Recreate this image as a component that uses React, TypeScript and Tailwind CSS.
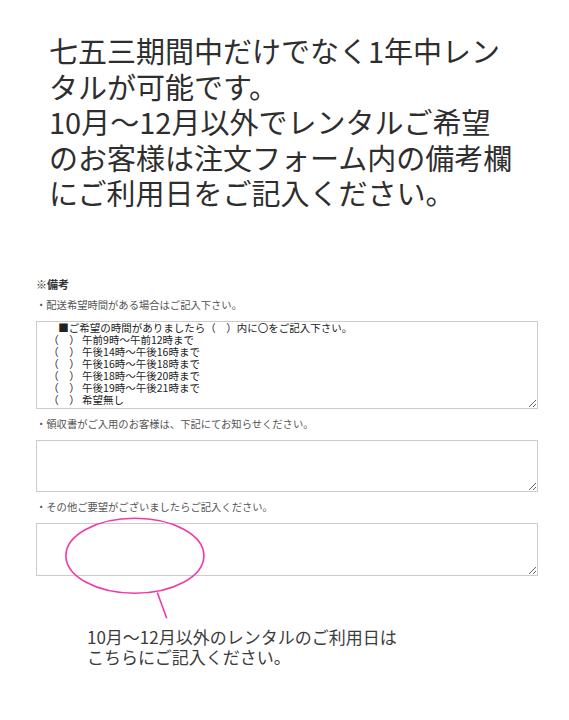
const jp = { fontFamily: '"Noto Sans CJK JP", "Noto Sans", sans-serif' };

const timeNote = [
  "　  ■ご希望の時間がありましたら（　）内に〇をご記入下さい。",
  "　（　） 午前9時〜午前12時まで",
  "　（　） 午後14時〜午後16時まで",
  "　（　） 午後16時〜午後18時まで",
  "　（　） 午後18時〜午後20時まで",
  "　（　） 午後19時〜午後21時まで",
  "　（　） 希望無し",
].join("\n");

function Field({ label, height, value, first }: { label: string; height: string; value?: string; first?: boolean }) {
  return (
    <div className="flex flex-col">
      <p className={`${first ? "mt-[5px]" : "mt-[7px]"} text-[10.3px] leading-[16px] text-[#555] whitespace-nowrap`}>
        {label}
      </p>
      <textarea
        readOnly
        defaultValue={value}
        className={`mt-[8px] ${height} w-full border border-[#cccccc] bg-white pl-[6px] pt-0 text-[10.5px] leading-[12px] text-[#222] overflow-hidden outline-none`}
        style={jp}
      />
    </div>
  );
}

export default function App() {
  return (
    <div className="relative w-[569px] min-h-[720px] bg-white" style={jp}>
      <p className="pt-[33px] pl-[49px] text-[29px] leading-[35.6px] text-[#2e2e2e] whitespace-nowrap">
        七五三期間中だけでなく1年中レン
        <br />
        タルが可能です。
        <br />
        10月〜12月以外でレンタルご希望
        <br />
        のお客様は注文フォーム内の備考欄
        <br />
        にご利用日をご記入ください。
      </p>

      <div className="flex flex-col pl-[36px] pr-[31px] mt-[65px]">
        <p className="text-[11px] leading-[16px] font-bold text-[#333]">※備考</p>
        <Field first label="・配送希望時間がある場合はご記入下さい。" height="h-[88px]" value={timeNote} />
        <Field label="・領収書がご入用のお客様は、下記にてお知らせください。" height="h-[52px]" />
        <Field label="・その他ご要望がございましたらご記入ください。" height="h-[53px]" />

        <p className="mt-[51px] ml-[51px] text-[17px] leading-[20.3px] text-[#3c3c3c] whitespace-nowrap">
          10月〜12月以外のレンタルのご利用日は
          <br />
          こちらにご記入ください。
        </p>
      </div>

      {/* pink annotation */}
      <svg className="pointer-events-none absolute left-0 top-0" width="569" height="720" viewBox="0 0 569 720">
        <ellipse cx="134.9" cy="555.8" rx="69" ry="37.5" fill="none" stroke="#f03aa8" strokeWidth="1.6" />
        <line x1="157.3" y1="592.5" x2="166.7" y2="618.3" stroke="#f03aa8" strokeWidth="1.6" />
      </svg>
    </div>
  );
}
